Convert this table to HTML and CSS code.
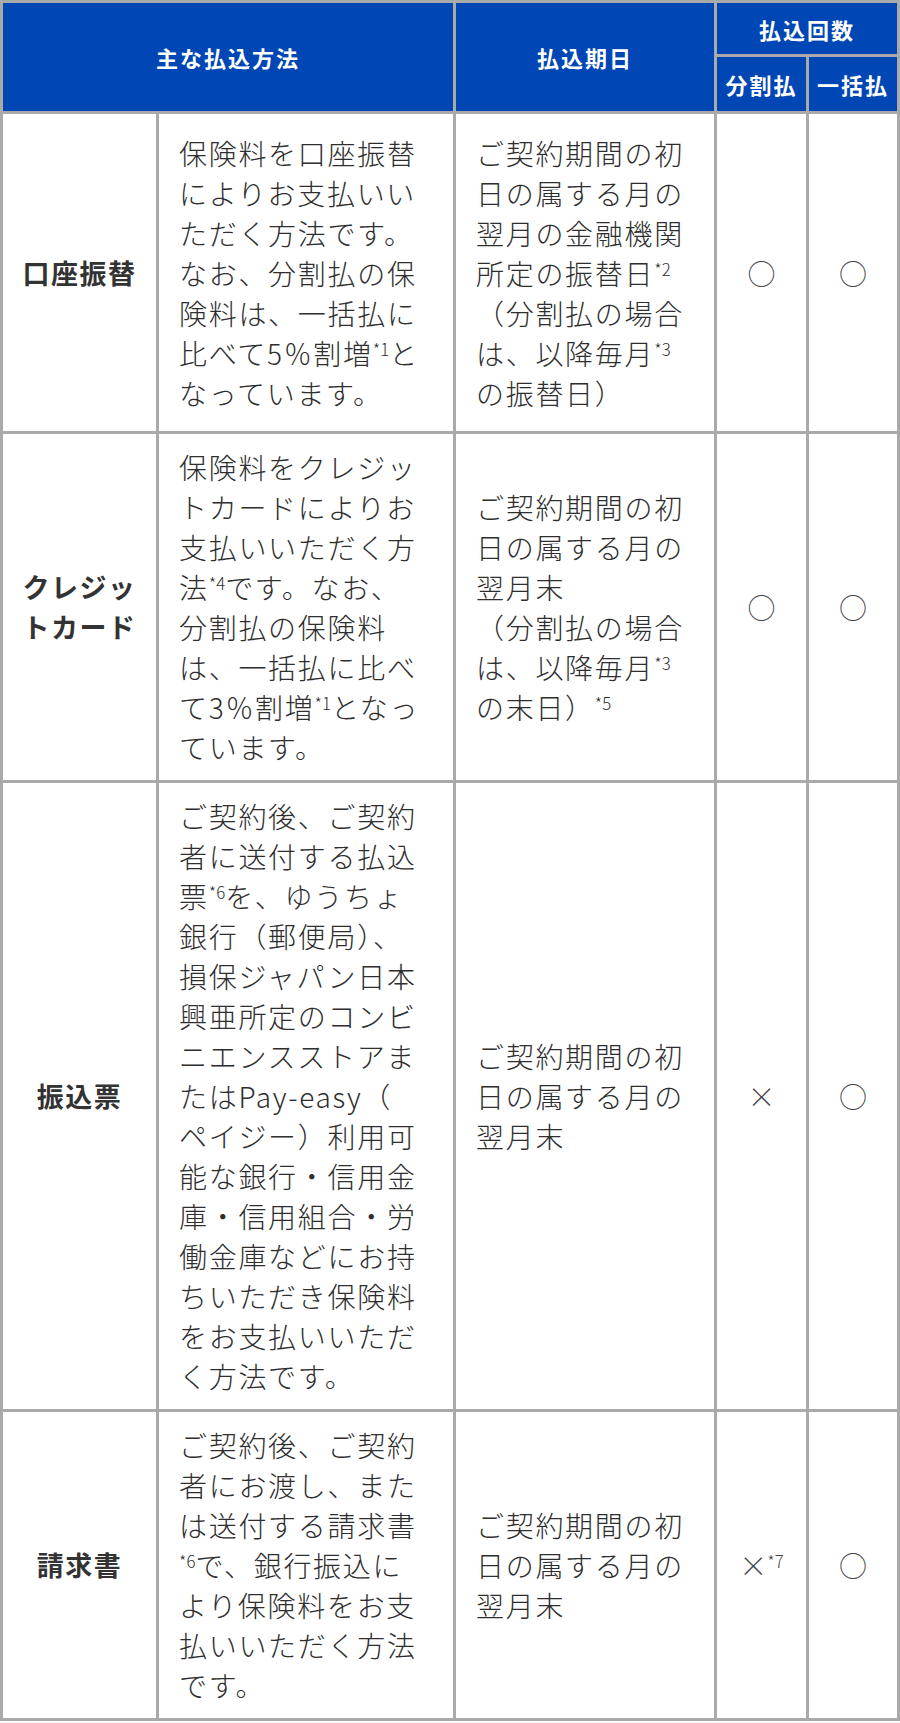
FILE: index.html
```html
<!DOCTYPE html>
<html lang="ja">
<head>
<meta charset="utf-8">
<title>主な払込方法</title>
<link rel="stylesheet" href="styles.css">
</head>
<body>
<table class="pay-table">
  <colgroup>
    <col class="col-method">
    <col class="col-desc">
    <col class="col-date">
    <col class="col-split">
    <col class="col-lump">
  </colgroup>
  <thead>
    <tr class="head-top">
      <th colspan="2" rowspan="2">主な払込方法</th>
      <th rowspan="2">払込期日</th>
      <th colspan="2">払込回数</th>
    </tr>
    <tr class="head-sub">
      <th>分割払</th>
      <th>一括払</th>
    </tr>
  </thead>
  <tbody>
    <tr class="row-first">
      <th class="method">口座振替</th>
      <td class="desc">保険料を口座振替<br>によりお支払いい<br>ただく方法です。<br>なお、分割払の保<br>険料は、一括払に<br>比べて5％割増<sup>*1</sup>と<br>なっています。</td>
      <td class="desc">ご契約期間の初<br>日の属する月の<br>翌月の金融機関<br>所定の振替日<sup>*2</sup><br>（分割払の場合<br>は、以降毎月<sup>*3</sup><br>の振替日）</td>
      <td class="mark">○</td>
      <td class="mark">○</td>
    </tr>
    <tr>
      <th class="method">クレジッ<br>トカード</th>
      <td class="desc">保険料をクレジッ<br>トカードによりお<br>支払いいただく方<br>法<sup>*4</sup>です。なお、<br>分割払の保険料<br>は、一括払に比べ<br>て3％割増<sup>*1</sup>となっ<br>ています。</td>
      <td class="desc">ご契約期間の初<br>日の属する月の<br>翌月末<br>（分割払の場合<br>は、以降毎月<sup>*3</sup><br>の末日）<sup>*5</sup></td>
      <td class="mark">○</td>
      <td class="mark">○</td>
    </tr>
    <tr>
      <th class="method">振込票</th>
      <td class="desc">ご契約後、ご契約<br>者に送付する払込<br>票<sup>*6</sup>を、ゆうちょ<br>銀行（郵便局）、<br>損保ジャパン日本<br>興亜所定のコンビ<br>ニエンスストアま<br>たはPay-easy（<br>ペイジー）利用可<br>能な銀行・信用金<br>庫・信用組合・労<br>働金庫などにお持<br>ちいただき保険料<br>をお支払いいただ<br>く方法です。</td>
      <td class="desc">ご契約期間の初<br>日の属する月の<br>翌月末</td>
      <td class="mark">×</td>
      <td class="mark">○</td>
    </tr>
    <tr>
      <th class="method">請求書</th>
      <td class="desc">ご契約後、ご契約<br>者にお渡し、また<br>は送付する請求書<br><sup>*6</sup>で、銀行振込に<br>より保険料をお支<br>払いいただく方法<br>です。</td>
      <td class="desc">ご契約期間の初<br>日の属する月の<br>翌月末</td>
      <td class="mark">×<sup>*7</sup></td>
      <td class="mark">○</td>
    </tr>
  </tbody>
</table>
</body>
</html>
```
FILE: styles.css
```css
html, body {
  margin: 0;
  padding: 0;
  background: #ffffff;
}

body {
  font-family: "Noto Sans CJK JP", "Noto Sans", sans-serif;
  color: #333333;
}

.pay-table {
  width: 900px;
  table-layout: fixed;
  border-collapse: separate;
  border-spacing: 3px;
  background: #aaaaaa;
}

.col-method { width: 153px; }
.col-desc { width: 294px; }
.col-date { width: 258px; }
.col-split { width: 89px; }
.col-lump { width: 88px; }

.pay-table thead th {
  background: #0047b5;
  color: #ffffff;
  font-size: 22px;
  font-weight: 700;
  letter-spacing: 2px;
  text-align: center;
  vertical-align: middle;
  padding: 0;
  line-height: 30px;
}

.head-top { height: 51px; }
.head-sub { height: 54px; }

.pay-table tbody th,
.pay-table tbody td {
  background: #ffffff;
  vertical-align: middle;
  font-size: 28px;
  line-height: 40px;
  letter-spacing: 1.7px;
  padding: 13px 16px 13px 20px;
}

.row-first { height: 317px; }

.pay-table .method {
  font-size: 27px;
  font-weight: 700;
  letter-spacing: 1.5px;
  text-align: center;
  padding: 13px 4px;
  color: #333333;
}

.desc {
  text-align: left;
  font-weight: 300;
  color: #2e2e2e;
}

.pay-table .mark {
  text-align: center;
  padding: 0;
  letter-spacing: 0;
  font-weight: 300;
  color: #444444;
}

sup {
  font-size: 60%;
  line-height: 0;
  vertical-align: 0.55em;
  letter-spacing: 0;
}
```
